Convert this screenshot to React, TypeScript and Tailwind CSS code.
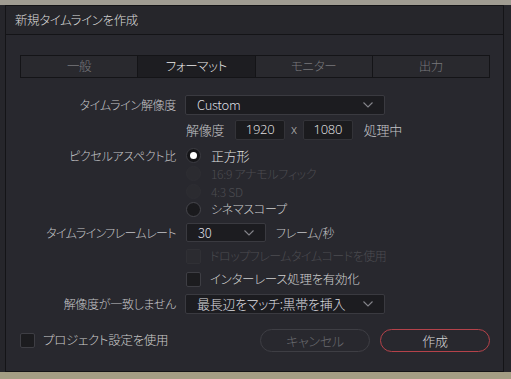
import React from "react";

const jp = "font-['Noto_Sans_CJK_JP','Noto_Sans',sans-serif] [font-feature-settings:'palt'] font-light";

function Chevron({ className = "" }: { className?: string }) {
  return (
    <svg width="10" height="6" viewBox="0 0 10 6" className={className}>
      <path d="M0.5 0.5 L5 5 L9.5 0.5" fill="none" stroke="#85858b" strokeWidth="1.1" />
    </svg>
  );
}

function Select({ w, text }: { w: string; text: string }) {
  return (
    <div
      className={`${w} h-full flex items-center justify-between pl-[11px] pr-[11px] bg-[#1c1c20] border border-[#3a3a40] rounded-[2px] text-[#dedee0] text-[13px]`}
    >
      <span>{text}</span>
      <Chevron />
    </div>
  );
}

function Radio({ state }: { state: "on" | "off" | "disabled" }) {
  if (state === "on")
    return (
      <div className="w-[15px] h-[15px] rounded-full bg-[#151518] border border-[#3c3c42] flex items-center justify-center">
        <div className="w-[7px] h-[7px] rounded-full bg-white" />
      </div>
    );
  if (state === "disabled")
    return <div className="w-[15px] h-[15px] rounded-full bg-[#2b2b30] border border-[#2e2e33]" />;
  return <div className="w-[15px] h-[15px] rounded-full bg-[#1a1a1d] border border-[#46464c]" />;
}

function Check({ disabled = false }: { disabled?: boolean }) {
  return (
    <div
      className={`w-[15px] h-[15px] rounded-[2px] ${
        disabled ? "bg-[#2b2b30] border border-[#303035]" : "bg-[#1c1c1f] border border-[#3e3e44]"
      }`}
    />
  );
}

export default function App() {
  const tabs = ["一般", "フォーマット", "モニター", "出力"];
  return (
    <div
      className={`w-[511px] h-[379px] overflow-hidden pt-[5px] pl-[5px] bg-[linear-gradient(to_bottom,#a09c92_0px,#a09c92_5px,#26262b_5px,#26262b_372px,#a49e84_372px)] ${jp}`}
    >
      <div className="w-[499px] h-[367px] bg-[#28282e] border border-[#141417] flex flex-col text-[12px] tracking-[-0.3px] text-[#c4c4c7]">
        <div className="h-[29px] shrink-0 flex items-center pl-[9px] bg-[#26262b] border-b border-[#141417] text-[12.5px] tracking-[-0.4px] text-[#dcdcdc]">
          新規タイムラインを作成
        </div>

        <div className="mt-[20px] ml-[14px] w-[470px] h-[23px] flex border border-[#141417] shrink-0">
          {tabs.map((t, i) => (
            <div
              key={t}
              className={`flex-1 flex items-center justify-center text-[12.5px] ${
                i > 0 ? "border-l border-[#141417]" : ""
              } ${i === 1 ? "bg-[#1d1d21] text-[#ececec]" : "bg-[#29292e] text-[#78787c]"}`}
            >
              {t}
            </div>
          ))}
        </div>

        <div className="flex flex-col mt-[17px]">
          <div className="flex h-[20px] items-center">
            <div className="w-[171px] text-right pr-[1px]">タイムライン解像度</div>
            <div className="ml-[8px] h-full">
              <Select w="w-[200px]" text="Custom" />
            </div>
          </div>

          <div className="flex h-[20px] items-center mt-[5px]">
            <div className="w-[171px]" />
            <div className="ml-[9px] flex items-center h-full">
              <span className="text-[13px]">解像度</span>
              <div className="ml-[11px] w-[50px] h-full bg-[#1b1b1e] border border-[#333338] rounded-[2px] flex items-center justify-center text-[13px] text-[#dedede] font-['Noto_Sans',sans-serif]">
                1920
              </div>
              <span className="mx-[6px] text-[#b8b8b8] font-['Noto_Sans',sans-serif]">x</span>
              <div className="w-[50px] h-full bg-[#1b1b1e] border border-[#333338] rounded-[2px] flex items-center justify-center text-[13px] text-[#dedede] font-['Noto_Sans',sans-serif]">
                1080
              </div>
              <span className="ml-[11px] text-[13px]">処理中</span>
            </div>
          </div>

          <div className="flex mt-[7px]">
            <div className="w-[171px] text-right pr-[1px] h-[18px] leading-[18px]">ピクセルアスペクト比</div>
            <div className="ml-[9px] flex flex-col">
              {[
                { s: "on" as const, t: "正方形", c: "text-[#dedede] text-[13px]" },
                { s: "disabled" as const, t: "16:9 アナモルフィック", c: "text-[#4c4c51]" },
                { s: "disabled" as const, t: "4:3 SD", c: "text-[#4c4c51]" },
                { s: "off" as const, t: "シネマスコープ", c: "text-[#d0d0d0]" },
              ].map((r) => (
                <div key={r.t} className="flex items-center h-[17.8px]">
                  <Radio state={r.s} />
                  <span className={`ml-[10px] ${r.c}`}>{r.t}</span>
                </div>
              ))}
            </div>
          </div>

          <div className="flex h-[19px] items-center mt-[5px]">
            <div className="w-[171px] text-right pr-[1px] tracking-[-0.6px]">タイムラインフレームレート</div>
            <div className="ml-[9px] h-full flex items-center">
              <Select w="w-[80px]" text="30" />
              <span className="ml-[10px]">フレーム/秒</span>
            </div>
          </div>

          <div className="flex h-[16px] items-center mt-[6px]">
            <div className="w-[171px]" />
            <div className="ml-[9px] flex items-center">
              <Check disabled />
              <span className="ml-[9px] text-[#4c4c51] tracking-[-0.5px]">ドロップフレームタイムコードを使用</span>
            </div>
          </div>
          <div className="flex h-[16px] items-center mt-[7px]">
            <div className="w-[171px]" />
            <div className="ml-[9px] flex items-center">
              <Check />
              <span className="ml-[9px] text-[#d0d0d0] text-[12.5px]">インターレース処理を有効化</span>
            </div>
          </div>

          <div className="flex h-[20px] items-center mt-[7px]">
            <div className="w-[171px] text-right pr-[1px]">解像度が一致しません</div>
            <div className="ml-[8px] h-full">
              <Select w="w-[200px]" text="最長辺をマッチ:黒帯を挿入" />
            </div>
          </div>
        </div>

        <div className="flex items-center mt-[15px] h-[23px]">
          <div className="ml-[14px] flex items-center">
            <Check />
            <span className="ml-[8px] text-[#cccccc] text-[12.5px]">プロジェクト設定を使用</span>
          </div>
          <div className="ml-auto mr-[13px] flex gap-[10px] h-full">
            <div className="w-[110px] h-full rounded-full border border-[#3e3e44] flex items-center justify-center text-[#6a6a6e] text-[13px]">
              キャンセル
            </div>
            <div className="w-[110px] h-full rounded-full border border-[#b5424a] flex items-center justify-center text-[#d6d6d6] text-[13px]">
              作成
            </div>
          </div>
        </div>
      </div>
    </div>
  );
}
